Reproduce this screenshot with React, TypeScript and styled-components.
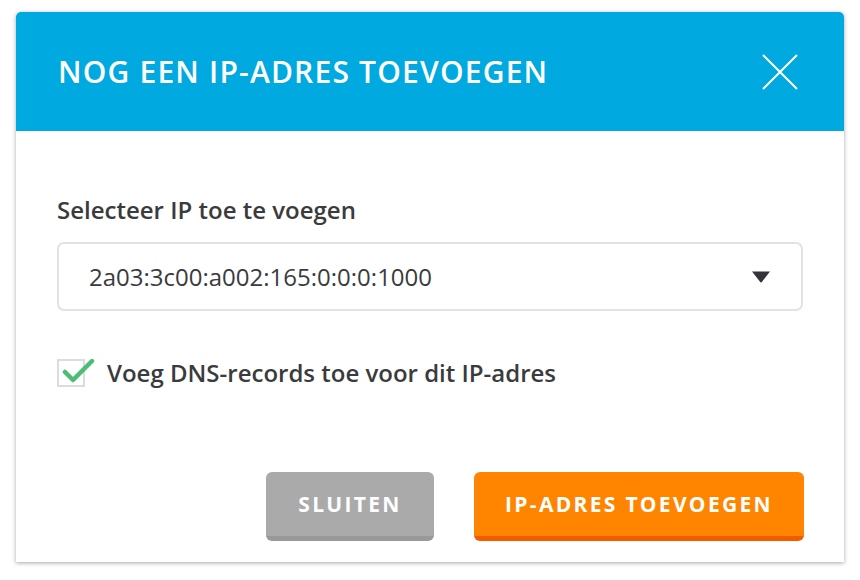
import React, { useState } from "react";
import styled, { createGlobalStyle } from "styled-components";

const GlobalStyle = createGlobalStyle`
	html, body {
		margin: 0;
		padding: 0;
		background: #ffffff;
		font-family: "Open Sans", "Liberation Sans", sans-serif;
	}
`;

const Page = styled.div`
	width: 860px;
	height: 580px;
	padding: 12px 16px 0;
	box-sizing: border-box;
	background: #ffffff;
`;

const Modal = styled.div`
	width: 828px;
	height: 550px;
	background: #ffffff;
	border-radius: 5px 5px 0 0;
	box-shadow: 0 1px 4px rgba(0, 0, 0, 0.35);
	display: flex;
	flex-direction: column;
	overflow: hidden;
`;

const Header = styled.div`
	height: 119px;
	flex-shrink: 0;
	background: #00a9df;
	display: flex;
	align-items: center;
	justify-content: space-between;
	padding: 0 46px 0 42px;
`;

const Title = styled.h2`
	margin: 0;
	color: #ffffff;
	font-size: 30px;
	font-weight: 600;
	letter-spacing: 1.2px;
`;

const CloseButton = styled.button`
	width: 36px;
	height: 36px;
	padding: 0;
	border: 0;
	background: transparent;
	cursor: pointer;
	display: flex;
`;

const Body = styled.div`
	flex: 1;
	display: flex;
	flex-direction: column;
	padding: 65px 41px 21px;
`;

const Label = styled.label`
	font-size: 24px;
	font-weight: 600;
	line-height: 28px;
	color: #3a3b3d;
	margin-bottom: 18px;
`;

const SelectBox = styled.div`
	height: 69px;
	box-sizing: border-box;
	border: 2px solid #e2e2e2;
	border-radius: 7px;
	display: flex;
	align-items: center;
	justify-content: space-between;
	padding: 0 30px 0 30px;
	font-size: 24px;
	color: #3a3b3d;
`;

const CheckRow = styled.label`
	margin-top: 45px;
	display: flex;
	align-items: center;
	gap: 22px;
	font-size: 24px;
	font-weight: 600;
	color: #3a3b3d;
	cursor: pointer;
`;

const CheckBox = styled.span`
	position: relative;
	width: 28px;
	height: 28px;
	box-sizing: border-box;
	border: 2px solid #dcdcdc;
	flex-shrink: 0;

	svg {
		position: absolute;
		left: 3px;
		top: -2px;
	}
`;

const Footer = styled.div`
	margin-top: auto;
	margin-right: -1px;
	display: flex;
	justify-content: flex-end;
	gap: 40px;
`;

const Button = styled.button<{ $variant: "grey" | "orange" }>`
	height: 69px;
	box-sizing: border-box;
	padding: 0 24px;
	border: 0;
	border-radius: 6px;
	font-family: "Open Sans", "Liberation Sans", sans-serif;
	font-size: 21px;
	font-weight: 700;
	letter-spacing: 2.3px;
	color: #ffffff;
	cursor: pointer;
	background: ${(p) => (p.$variant === "orange" ? "#ff8500" : "#aaaaaa")};
	border-bottom: 5px solid ${(p) => (p.$variant === "orange" ? "#f25c00" : "#999999")};
	min-width: ${(p) => (p.$variant === "orange" ? "330px" : "168px")};
`;

export default function App() {
	const [checked, setChecked] = useState(true);

	return (
		<>
			<GlobalStyle />
			<Page>
				<Modal>
					<Header>
						<Title>NOG EEN IP-ADRES TOEVOEGEN</Title>
						<CloseButton aria-label="Sluiten">
							<svg width="36" height="36" viewBox="0 0 36 36">
								<path d="M1 1 L35 35 M35 1 L1 35" stroke="#ffffff" strokeWidth="2" />
							</svg>
						</CloseButton>
					</Header>
					<Body>
						<Label>Selecteer IP toe te voegen</Label>
						<SelectBox>
							<span>2a03:3c00:a002:165:0:0:0:1000</span>
							<svg width="20" height="12" viewBox="0 0 20 12">
								<path d="M1 0.5 H19 L10.6 11.2 Q10 12 9.4 11.2 Z" fill="#333538" />
							</svg>
						</SelectBox>
						<CheckRow onClick={() => setChecked(!checked)}>
							<CheckBox>
								{checked && (
									<svg width="34" height="26" viewBox="0 0 34 26">
										<path d="M3 13 L11 21 L30 2" fill="none" stroke="#4dbd74" strokeWidth="4.5" strokeLinecap="round" strokeLinejoin="round" />
									</svg>
								)}
							</CheckBox>
							Voeg DNS-records toe voor dit IP-adres
						</CheckRow>
						<Footer>
							<Button $variant="grey">SLUITEN</Button>
							<Button $variant="orange">IP-ADRES TOEVOEGEN</Button>
						</Footer>
					</Body>
				</Modal>
			</Page>
		</>
	);
}
